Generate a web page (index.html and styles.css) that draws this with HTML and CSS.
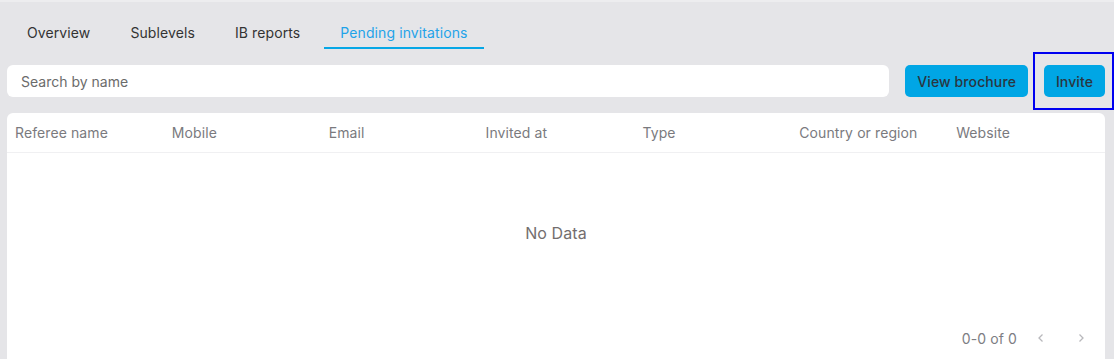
FILE: index.html
```html
<!DOCTYPE html>
<html>
<head>
    <meta charset="UTF-8">
    <title>Pending invitations</title>
    <link rel="stylesheet" href="styles.css">
</head>
<body>
    <div class="page">
        <div class="tabs">
            <div class="tab">Overview</div>
            <div class="tab">Sublevels</div>
            <div class="tab">IB reports</div>
            <div class="tab active">Pending invitations</div>
        </div>

        <div class="toolbar">
            <input type="text" class="search" placeholder="Search by name">
            <button class="btn">View brochure</button>
            <div class="highlight">
                <button class="btn">Invite</button>
            </div>
        </div>

        <div class="card">
            <div class="table-head">
                <div class="col">Referee name</div>
                <div class="col">Mobile</div>
                <div class="col">Email</div>
                <div class="col">Invited at</div>
                <div class="col">Type</div>
                <div class="col">Country or region</div>
                <div class="col">Website</div>
            </div>
            <div class="empty">No Data</div>
            <div class="pager">
                <span class="range">0-0 of 0</span>
                <span class="arrow">
                    <svg width="12" height="12" viewBox="0 0 12 12"><path d="M7.5 2.5 L4 6 L7.5 9.5" fill="none" stroke="#b8b8bc" stroke-width="1.3"/></svg>
                </span>
                <span class="arrow">
                    <svg width="12" height="12" viewBox="0 0 12 12"><path d="M4.5 2.5 L8 6 L4.5 9.5" fill="none" stroke="#b8b8bc" stroke-width="1.3"/></svg>
                </span>
            </div>
        </div>
    </div>
</body>
</html>
```

FILE: styles.css
```css
html, body {
    margin: 0;
    height: 100%;
    overflow: hidden;
}
body {
    font-family: Inter, "Noto Sans", Arial, sans-serif;
    font-size: 14px;
    letter-spacing: 0.1px;
    background-color: #e5e5e8;
    border-top: 2px solid #ededef;
    box-sizing: border-box;
}
.page {
    padding: 0 9px 0 7px;
}
.tabs {
    display: flex;
    margin-top: 15px;
}
.tab {
    margin: 0 4px;
    padding: 8px 16px 6px;
    line-height: 16px;
    color: #333;
    border-bottom: 2px solid transparent;
}
.tab.active {
    color: #1fa3e8;
    border-bottom-color: #06a7e6;
}
.toolbar {
    display: flex;
    align-items: center;
    gap: 16px;
    margin-top: 16px;
}
.search {
    flex: 1;
    height: 32px;
    padding: 0 14px;
    border: none;
    border-radius: 6px;
    background: white;
    font-family: inherit;
    font-size: 14px;
    box-sizing: border-box;
}
.search::placeholder {
    color: #6b6b6b;
}
.search:focus {
    outline: none;
}
.btn {
    height: 32px;
    padding: 0 12px;
    border: none;
    border-radius: 5px;
    background: #00a6e5;
    color: #2a3540;
    font-family: inherit;
    font-size: 14px;
    font-weight: 500;
    letter-spacing: 0.1px;
    cursor: pointer;
}
.highlight {
    position: relative;
}
.highlight::after {
    content: "";
    position: absolute;
    left: -11px;
    right: -9px;
    top: -13px;
    bottom: -13px;
    border: 2px solid #0000f0;
}
.card {
    margin-top: 16px;
    background: white;
    border-radius: 6px 6px 0 0;
}
.table-head {
    display: grid;
    grid-template-columns: repeat(7, 1fr);
    height: 39px;
    align-items: center;
    border-bottom: 1px solid #f0f0f2;
}
.col {
    padding-left: 8px;
    color: #7a7a7e;
}
.empty {
    height: 160px;
    display: flex;
    align-items: center;
    justify-content: center;
    font-size: 16px;
    color: #736e6e;
}
.pager {
    display: flex;
    justify-content: flex-end;
    align-items: center;
    height: 50px;
    padding-right: 4px;
    color: #7d7d83;
}
.range {
    margin-right: 4px;
}
.arrow {
    display: flex;
    width: 40px;
    justify-content: center;
}
```
